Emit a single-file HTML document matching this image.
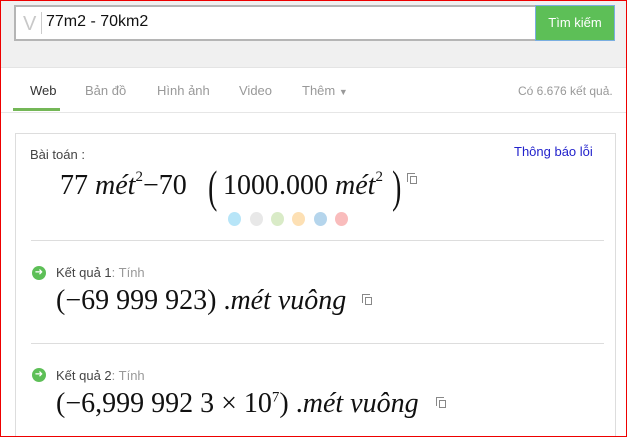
<!DOCTYPE html>
<html><head><meta charset="utf-8"><style>
*{margin:0;padding:0;box-sizing:border-box}
html,body{width:627px;height:437px;overflow:hidden}
body{position:relative;font-family:"Liberation Sans",sans-serif;background:#fff;}
.frame{position:absolute;left:0;top:0;width:627px;height:437px;border:1px solid #e00;z-index:10}
.top{position:absolute;left:0;top:0;width:627px;height:68px;background:#f0f0f0;border-bottom:1px solid #e4e4e4}
.box{position:absolute;left:14px;top:5px;width:522px;height:36px;background:#fff;border:2px solid #b5b5b5;border-right:none}
.v{position:absolute;left:7px;top:6px;font-size:20px;color:#c8c8c8}
.vl{position:absolute;left:25px;top:5px;width:1px;height:22px;background:#ccc}
.q{position:absolute;left:30px;top:6px;font-size:16px;color:#111}
.btn{position:absolute;left:535px;top:5px;width:80px;height:36px;background:#5dbf57;border:1px solid #7aaee0;color:#fff;font-size:13px;text-align:center;line-height:34px}
.tab{position:absolute;top:83px;font-size:13px;color:#999}
.ul{position:absolute;left:13px;top:108px;width:47px;height:3px;background:#74b757}
.hl{position:absolute;left:0;top:112px;width:627px;height:1px;background:#e6e6e6}
.card{position:absolute;left:15px;top:133px;width:601px;height:320px;border:1px solid #ddd}
.sep{position:absolute;left:31px;width:573px;height:1px;background:#ddd}
.m{position:absolute;font-family:"Liberation Serif",serif;font-size:28px;color:#111;white-space:nowrap}
.m i{font-style:italic}
.lab{position:absolute;font-size:13px;color:#444}
.lab span{color:#999}
.ic{position:absolute;width:14px;height:14px;border-radius:50%;background:#5dbf57;color:#fff;font-size:10px;line-height:14px;text-align:center}
.cp{position:absolute;width:7px;height:8px;border:1px solid #888}
.cp:after{content:"";position:absolute;left:-4px;top:-4px;width:7px;height:8px;border-left:1px solid #888;border-top:1px solid #888}
.dot{position:absolute;top:212px;width:13px;height:14px;border-radius:50%}
.bp{position:absolute;font-family:"Liberation Serif",serif;font-size:46px;font-weight:100;color:#111;transform:scaleX(.6)}
</style></head><body>
<div class="top"></div>
<div class="box"><span class="v">V</span><div class="vl"></div><span class="q">77m2 - 70km2</span></div>
<div class="btn">Tìm kiếm</div>
<div class="tab" style="left:30px;color:#333">Web</div>
<div class="tab" style="left:85px">Bản đồ</div>
<div class="tab" style="left:157px">Hình ảnh</div>
<div class="tab" style="left:239px">Video</div>
<div class="tab" style="left:302px">Thêm <span style="font-size:9px">▼</span></div>
<div class="tab" style="left:518px;font-size:12px;top:84px">Có 6.676 kết quả.</div>
<div class="ul"></div><div class="hl"></div>
<div class="card"></div>
<div class="lab" style="left:30px;top:147px">Bài toán :</div>
<div class="lab" style="left:514px;top:144px;color:#22c">Thông báo lỗi</div>
<div class="m" style="left:60px;top:170px">77 <i>mét</i><sup style="font-size:15px;position:relative;top:-3px">2</sup>−70</div>
<div class="bp" style="left:205px;top:160px">(</div>
<div class="m" style="left:223px;top:170px">1000.000 <i>mét</i><sup style="font-size:15px;position:relative;top:-3px">2</sup></div>
<div class="bp" style="left:389px;top:160px">)</div>
<div class="cp" style="left:410px;top:176px"></div>
<div class="dot" style="left:228px;background:#b7e5f8"></div>
<div class="dot" style="left:250px;background:#e8e8e8"></div>
<div class="dot" style="left:271px;background:#d9ebc7"></div>
<div class="dot" style="left:292px;background:#fde0b4"></div>
<div class="dot" style="left:314px;background:#b5d5ec"></div>
<div class="dot" style="left:335px;background:#f9bcbc"></div>
<div class="sep" style="top:240px"></div>
<div class="ic" style="left:32px;top:266px">➜</div>
<div class="lab" style="left:56px;top:265px">Kết quả 1<span>: Tính</span></div>
<div class="m" style="left:56px;top:285px">(−69 999 923) .<i>mét vuông</i></div>
<div class="cp" style="left:365px;top:297px"></div>
<div class="sep" style="top:343px"></div>
<div class="ic" style="left:32px;top:368px">➜</div>
<div class="lab" style="left:56px;top:368px">Kết quả 2<span>: Tính</span></div>
<div class="m" style="left:56px;top:388px">(−6,999 992 3 × 10<sup style="font-size:15px">7</sup>) .<i>mét vuông</i></div>
<div class="cp" style="left:439px;top:400px"></div>
<div class="frame"></div>
</body></html>
